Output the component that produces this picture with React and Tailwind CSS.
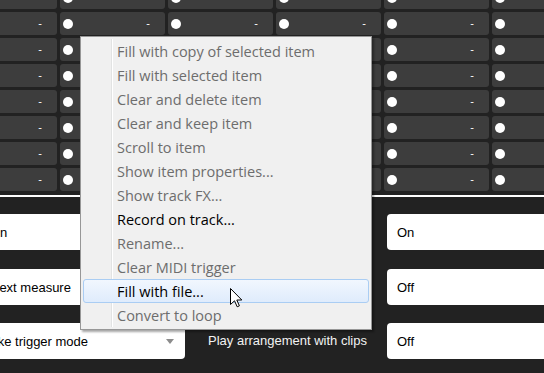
import React from 'react';

const ROWS = 8;
const COLS = 6;

const menuItems = [
  { label: 'Fill with copy of selected item' },
  { label: 'Fill with selected item' },
  { label: 'Clear and delete item' },
  { label: 'Clear and keep item' },
  { label: 'Scroll to item' },
  { label: 'Show item properties...' },
  { label: 'Show track FX...' },
  { label: 'Record on track...', enabled: true },
  { label: 'Rename...' },
  { label: 'Clear MIDI trigger' },
  { label: 'Fill with file...', enabled: true, hover: true },
  { label: 'Convert to loop' },
];

const Slot = ({ first }) => (
  <div className="h-[23px] rounded-[3px] bg-[#3d3d3d] flex items-center pl-[3px] pr-[15px]">
    {!first && <span className="w-[10px] h-[10px] rounded-full bg-white" />}
    <span className="ml-auto text-[11px] leading-none text-white">-</span>
  </div>
);

const ContextMenu = () => (
  <div className="absolute left-[80px] top-[36px] w-[292px] border border-[#979797] bg-[#f0f0f0] p-[2px] shadow-[2px_2px_2px_rgba(0,0,0,0.35)] font-['Open_Sans',sans-serif] text-[14.5px]">
    <div className="relative">
      {/* icon gutter separator */}
      <div className="absolute left-[28px] top-0 bottom-0 w-px bg-[#e2e3e3]" />
      <div className="absolute left-[29px] top-0 bottom-0 w-px bg-white" />
      {menuItems.map((item) => (
        <div
          key={item.label}
          className={
            item.hover
              ? 'relative h-[24px] flex items-center pl-[33px] pt-[1px] rounded-[3px] border border-[#aacdf3] bg-gradient-to-b from-[#f1f7fe] to-[#dfecfc] text-black whitespace-nowrap'
              : `relative h-[24px] flex items-center pl-[34px] pt-[1px] whitespace-nowrap ${item.enabled ? 'text-black' : 'text-[#6d6d6d]'}`
          }
        >
          {item.label}
        </div>
      ))}
    </div>
  </div>
);

const Cursor = () => (
  <svg className="absolute left-[230px] top-[288px]" width="13" height="20" viewBox="0 0 13 20">
    <path
      d="M0.5 0.5 L0.5 16.5 L4.5 12.8 L7.2 18.8 L9.4 17.8 L6.8 12 L11.8 12 Z"
      fill="white"
      stroke="black"
      strokeWidth="1"
      strokeLinejoin="miter"
    />
  </svg>
);

const App = () => {
  return (
    <div className="relative w-[544px] h-[373px] overflow-hidden bg-[#222] font-['Liberation_Sans',Arial,sans-serif]">
      {/* clip slot grid */}
      <div className="mt-[-14px] ml-[-48px] grid grid-cols-[repeat(6,105px)] gap-[3px]">
        {Array.from({ length: ROWS * COLS }).map((_, i) => (
          <Slot key={i} first={i % COLS === 0} />
        ))}
      </div>
      <div className="mt-[4px] h-[2px] bg-white" />

      {/* settings */}
      <div className="pt-[17px] text-[13px]">
        <div className="flex items-center">
          <div className="ml-[-20px] w-[205px] h-[36px] shrink-0 bg-white rounded-r-[4px] pl-[10px] pt-[1px] flex items-center text-black">On</div>
          <div className="w-[202px] shrink-0" />
          <div className="w-[170px] h-[36px] shrink-0 bg-white rounded-l-[4px] pl-[10px] pt-[1px] flex items-center text-black">On</div>
        </div>
        <div className="flex items-center mt-[19px]">
          <div className="ml-[-20px] w-[205px] h-[36px] shrink-0 bg-white rounded-r-[4px] pl-[10px] pt-[1px] flex items-center text-black">Next measure</div>
          <div className="w-[202px] shrink-0" />
          <div className="w-[170px] h-[36px] shrink-0 bg-white rounded-l-[4px] pl-[10px] pt-[1px] flex items-center text-black">Off</div>
        </div>
        <div className="flex items-center mt-[18px]">
          <div className="ml-[-20px] w-[205px] h-[36px] shrink-0 bg-white rounded-r-[4px] pl-[4px] pr-[11px] pt-[1px] flex items-center text-black">
            <span className="whitespace-nowrap">Take trigger mode</span>
            <svg className="ml-auto" width="8" height="5" viewBox="0 0 8 5">
              <polygon points="0,0 8,0 4,5" fill="#8c8c8c" />
            </svg>
          </div>
          <div className="w-[202px] shrink-0 pl-[23px] text-[#f2f2f2] whitespace-nowrap">Play arrangement with clips</div>
          <div className="w-[170px] h-[36px] shrink-0 bg-white rounded-l-[4px] pl-[10px] pt-[1px] flex items-center text-black">Off</div>
        </div>
      </div>

      <ContextMenu />
      <Cursor />
    </div>
  );
};

export default App;
